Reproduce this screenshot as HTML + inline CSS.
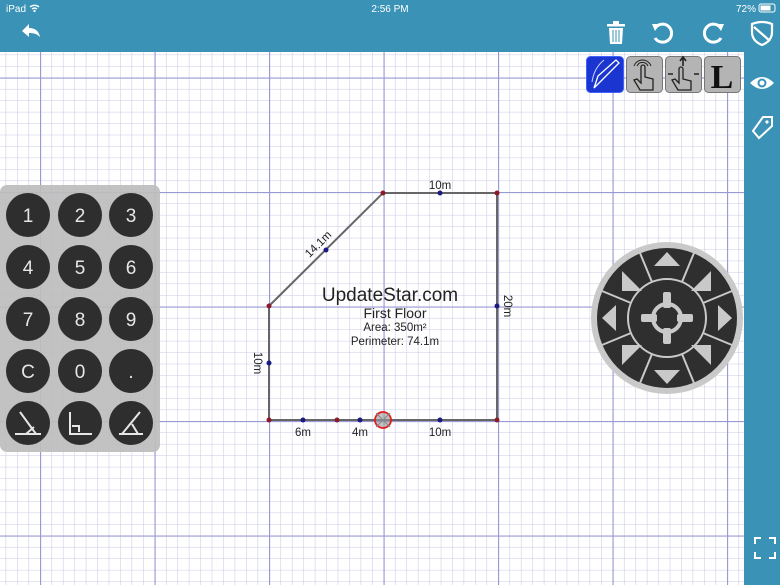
<!DOCTYPE html>
<html><head><meta charset="utf-8"><style>
html,body{margin:0;padding:0;width:780px;height:585px;overflow:hidden;font-family:"Liberation Sans",sans-serif;background:#fff}
</style></head><body>
<svg width="780" height="585" viewBox="0 0 780 585" xmlns="http://www.w3.org/2000/svg" font-family="Liberation Sans, DejaVu Sans, sans-serif">
<defs>
<pattern id="minor" x="40" y="77.5" width="11.45" height="11.45" patternUnits="userSpaceOnUse">
<path d="M0 0V11.45M0 0H11.45" stroke="#cacae6" stroke-width="1.1" fill="none"/>
</pattern>
<pattern id="major" x="40" y="77.5" width="114.5" height="114.5" patternUnits="userSpaceOnUse">
<path d="M0.5 0V114.5M0 0.5H114.5" stroke="#9a9ad2" stroke-width="1.3" fill="none"/>
</pattern>
</defs>
<rect x="0" y="52" width="744" height="533" fill="#fff"/>
<rect x="0" y="52" width="744" height="533" fill="url(#minor)"/>
<rect x="0" y="52" width="744" height="533" fill="url(#major)"/>

<rect x="0" y="0" width="780" height="52" fill="#3a93b6"/>
<rect x="744" y="52" width="36" height="533" fill="#3a93b6"/>
<text x="6" y="12" font-size="10" fill="#fff">iPad</text>
<path d="M30 7a7 7 0 0 1 9 0M32 9a4 4 0 0 1 5 0" stroke="#fff" stroke-width="1.4" fill="none"/><circle cx="34.5" cy="11" r="1.2" fill="#fff"/>
<text x="390" y="12" font-size="10" fill="#fff" text-anchor="middle">2:56 PM</text>
<text x="756" y="12" font-size="10" fill="#fff" text-anchor="end">72%</text>
<rect x="759" y="4" width="16" height="8" rx="2" fill="none" stroke="#fff" stroke-width="1"/><rect x="760.5" y="5.5" width="10" height="5" fill="#fff"/>
<path d="M22 31l7-7v4c6 0 10 3 11 9c-3-3-6-4-11-4v4z" fill="#fff"/>
<rect x="607" y="24" width="18" height="2.5" fill="#fff"/><rect x="613" y="21" width="6" height="3" fill="#fff"/>
<path d="M609 28h14l-1 16h-12z" fill="#fff"/><path d="M613 30v12M616 30v12M619 30v12" stroke="#3a93b6" stroke-width="1"/>
<path d="M656 27a9 9 0 1 1 -1 11" stroke="#fff" stroke-width="3" fill="none"/><path d="M652 24l8 0l-5 7z" fill="#fff"/>
<path d="M720 27a9 9 0 1 0 1 11" stroke="#fff" stroke-width="3" fill="none"/><path d="M724 24l-8 0l5 7z" fill="#fff"/>
<path d="M752 24q10-4 20 0v8q0 9-10 13q-10-4-10-13z" stroke="#fff" stroke-width="2.2" fill="none"/><path d="M754 27l16 14" stroke="#fff" stroke-width="2.2"/>
<path d="M750 83q12-12 24 0q-12 12-24 0z" fill="#fff"/><circle cx="762" cy="83" r="4.5" fill="#3a93b6"/><circle cx="762" cy="83" r="2.5" fill="#fff"/>
<path d="M753 131l10-14h9v9l-13 12z" stroke="#fff" stroke-width="2" fill="none"/><circle cx="767" cy="122" r="1.6" fill="#fff"/>
<path d="M755 551v-6h6M769 545h6v6M775 559v6h-6M761 565h-6v-6" stroke="#fff" stroke-width="2" fill="none" transform="translate(0,-7)"/>

<rect x="586.5" y="56.5" width="37" height="36" rx="4" fill="#1a35d0" stroke="#4060ff"/>
<path d="M594 88l4-12 18-16 3 3-17 17z" stroke="#fff" stroke-width="1.3" fill="none"/><path d="M592 82q2-14 12-22" stroke="#cfd8ff" stroke-width="1" fill="none"/>
<rect x="626.5" y="56.5" width="36" height="36" rx="4" fill="#b4b4b4" stroke="#777"/>
<path d="M640 90l-6-10 3-1 4 4v-16a2 2 0 0 1 4 0v10l8 2v11z" stroke="#222" stroke-width="1.3" fill="none"/><path d="M637 66a6 6 0 0 1 11 0M634 66a9 9 0 0 1 17 0" stroke="#222" stroke-width="1" fill="none"/>
<rect x="665.5" y="56.5" width="36" height="36" rx="4" fill="#b4b4b4" stroke="#777"/>
<path d="M678 90l-6-10 3-1 4 4v-14a2 2 0 0 1 4 0v10l8 2v9z" stroke="#222" stroke-width="1.3" fill="none"/><path d="M683 66v-8M680 61l3-4 3 4M668 74h5M694 74h5" stroke="#222" stroke-width="1.6" fill="none"/>
<rect x="704.5" y="56.5" width="36" height="36" rx="4" fill="#b4b4b4" stroke="#777"/>
<text x="722" y="88" font-size="34" font-family="Liberation Serif, serif" font-weight="bold" text-anchor="middle" fill="#111">L</text>

<path d="M269 306L383 193H497V420H269Z" fill="none" stroke="#666" stroke-width="2"/>
<g fill="#8b1a2a"><circle cx="269" cy="306" r="2.5"/><circle cx="383" cy="193" r="2.5"/><circle cx="497" cy="193" r="2.5"/><circle cx="497" cy="420" r="2.5"/><circle cx="269" cy="420" r="2.5"/><circle cx="337" cy="420" r="2.5"/></g>
<g fill="#1a1a80"><circle cx="326" cy="250" r="2.5"/><circle cx="440" cy="193" r="2.5"/><circle cx="497" cy="306" r="2.5"/><circle cx="269" cy="363" r="2.5"/><circle cx="303" cy="420" r="2.5"/><circle cx="360" cy="420" r="2.5"/><circle cx="440" cy="420" r="2.5"/></g>
<circle cx="383" cy="420" r="8" fill="#9a9a9a" fill-opacity="0.6" stroke="#e02020" stroke-width="1.8"/>
<path d="M376 413l14 14M390 413l-14 14" stroke="#888" stroke-width="1"/>
<g font-size="11.5" fill="#222">
<text x="440" y="189" text-anchor="middle">10m</text>
<text x="318" y="248" text-anchor="middle" transform="rotate(-45 318 244)">14.1m</text>
<text x="508" y="310" text-anchor="middle" transform="rotate(90 508 306)">20m</text>
<text x="258" y="367" text-anchor="middle" transform="rotate(90 258 363)">10m</text>
<text x="303" y="436" text-anchor="middle">6m</text>
<text x="360" y="436" text-anchor="middle">4m</text>
<text x="440" y="436" text-anchor="middle">10m</text>
</g>
<text x="390" y="301" font-size="19" fill="#222" text-anchor="middle">UpdateStar.com</text>
<text x="395" y="318" font-size="14" fill="#222" text-anchor="middle">First Floor</text>
<text x="395" y="331" font-size="11.5" fill="#222" text-anchor="middle">Area: 350m²</text>
<text x="395" y="345" font-size="11.5" fill="#222" text-anchor="middle">Perimeter: 74.1m</text>

<rect x="0" y="185" width="160" height="267" rx="7" fill="#bdbdbd" fill-opacity="0.92"/>
<g fill="#2e2e2e">
<circle cx="28" cy="215" r="22"/><circle cx="80" cy="215" r="22"/><circle cx="131" cy="215" r="22"/>
<circle cx="28" cy="267" r="22"/><circle cx="80" cy="267" r="22"/><circle cx="131" cy="267" r="22"/>
<circle cx="28" cy="319" r="22"/><circle cx="80" cy="319" r="22"/><circle cx="131" cy="319" r="22"/>
<circle cx="28" cy="371" r="22"/><circle cx="80" cy="371" r="22"/><circle cx="131" cy="371" r="22"/>
<circle cx="28" cy="423" r="22"/><circle cx="80" cy="423" r="22"/><circle cx="131" cy="423" r="22"/>
</g>
<g font-size="19" fill="#e6e6e6" text-anchor="middle">
<text x="28" y="222">1</text><text x="80" y="222">2</text><text x="131" y="222">3</text>
<text x="28" y="274">4</text><text x="80" y="274">5</text><text x="131" y="274">6</text>
<text x="28" y="326">7</text><text x="80" y="326">8</text><text x="131" y="326">9</text>
<text x="28" y="378">C</text><text x="80" y="378">0</text><text x="131" y="378">.</text>
</g>
<g stroke="#e6e6e6" stroke-width="2" fill="none">
<path d="M15 434h26M20 412l16 22M34 427l-8 7"/>
<path d="M70 412v22h22M72 426h7v6"/>
<path d="M119 434h24M140 412l-18 22M132 424l6 10"/>
</g>

<circle cx="667" cy="318" r="76" fill="#c9c9c9"/>
<circle cx="667" cy="318" r="70" fill="#2f2f2f"/>
<circle cx="667" cy="318" r="39" fill="none" stroke="#c9c9c9" stroke-width="2"/>
<g stroke="#c9c9c9" stroke-width="2">
<path d="M682 282L694 253M703 303L732 291M703 333L732 345M682 354L694 383M652 354L640 383M631 333L602 345M631 303L602 291M652 282L640 253"/>
</g>
<g fill="#c9c9c9">
<path d="M654 266h26l-13-14z"/><path d="M654 370h26l-13 14z"/>
<path d="M616 305v26l-14-13z"/><path d="M718 305v26l14-13z"/>
<path d="M622 271v20h20z"/><path d="M711 271v20h-20z"/>
<path d="M622 365v-20h20z"/><path d="M711 365v-20h-20z"/>
</g>
<circle cx="667" cy="318" r="14" fill="none" stroke="#c9c9c9" stroke-width="4"/>
<g fill="#c9c9c9">
<rect x="663" y="292" width="8" height="16" rx="2"/><rect x="663" y="328" width="8" height="16" rx="2"/>
<rect x="641" y="314" width="16" height="8" rx="2"/><rect x="677" y="314" width="16" height="8" rx="2"/>
</g>
</svg>
</body></html>
